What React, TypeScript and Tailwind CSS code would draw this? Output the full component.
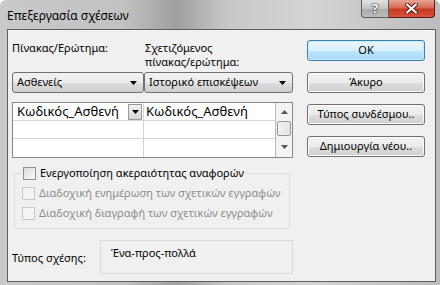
import React from 'react';

const ui = { fontFamily: '"Noto Sans", "Open Sans", Arial, sans-serif' };

function Caret({ className = '' }: { className?: string }) {
  return (
    <svg width="7" height="4" viewBox="0 0 7 4" className={className}>
      <path d="M0 0h7L3.5 4z" fill="#000" />
    </svg>
  );
}

function Combo({ label, width }: { label: string; width: string }) {
  return (
    <div
      className={`${width} h-[21px] flex items-center justify-between pl-[4px] pr-[6px] rounded-[3px] border border-[#707070] bg-[linear-gradient(#f2f2f2_0%,#ebebeb_50%,#dddddd_51%,#cfcfcf_100%)] text-[11px] text-black`}
    >
      <span>{label}</span>
      <Caret />
    </div>
  );
}

function Button({ label, primary }: { label: string; primary?: boolean }) {
  return (
    <div
      className={`w-[118px] h-[21px] flex items-center justify-center rounded-[3px] text-[11px] text-black border ${
        primary
          ? 'border-[#3c7fb1] bg-[linear-gradient(#eaf6fd_0%,#d9f0fc_50%,#bee6fd_51%,#a7d9f5_100%)] shadow-[inset_0_0_0_1px_#c5eefc]'
          : 'border-[#707070] bg-[linear-gradient(#f2f2f2_0%,#ebebeb_50%,#dddddd_51%,#cfcfcf_100%)] shadow-[inset_0_0_0_1px_#fcfcfc]'
      }`}
    >
      {label}
    </div>
  );
}

function Check({ label, disabled }: { label: string; disabled?: boolean }) {
  return (
    <div className="flex items-center gap-[4px] h-[14px] whitespace-nowrap">
      <span
        className={`w-[13px] h-[13px] shrink-0 border ${
          disabled
            ? 'border-[#c8c8c8] bg-[#f4f4f4]'
            : 'border-[#8e8f8f] bg-[linear-gradient(135deg,#dcdcdc,#fbfbfb)]'
        }`}
      />
      <span className={`text-[11px] leading-[14px] ${disabled ? 'text-[#8d8d8d]' : 'text-black'}`}>{label}</span>
    </div>
  );
}

export default function App() {
  return (
    <div
      className="w-[440px] h-[285px] flex flex-col pl-[7px] pr-[4px] pb-[3px] rounded-t-[6px] bg-[linear-gradient(90deg,#c9c9c9_0%,#c2c2c2_28%,#9f9f9f_40%,#c8c8c8_52%,#d4d4d4_70%,#bcbcbc_100%)] overflow-hidden"
      style={ui}
    >
      <div className="h-[29px] flex items-start justify-between">
        <div className="pt-[7px] text-[12px] text-black">Επεξεργασία σχέσεων</div>
        <div className="flex mr-[1px]">
          <div className="w-[28px] h-[18px] flex items-center justify-center border border-t-0 border-[#5b5b5b] rounded-bl-[4px] bg-[linear-gradient(#e2e2e2_0%,#c4c4c4_50%,#a9a9a9_51%,#bcbcbc_100%)] text-white font-bold text-[13px] [text-shadow:0_0_1px_#333,0_0_1px_#333,0_0_2px_#333]">
            ?
          </div>
          <div className="w-[46px] h-[18px] flex items-center justify-center border border-t-0 border-l-0 border-[#5b1d14] rounded-br-[4px] bg-[linear-gradient(#e8a493_0%,#d86a55_45%,#c83a22_55%,#d9533c_100%)]">
            <svg width="13" height="11" viewBox="0 0 13 11">
              <path d="M2 1.5l9 8M11 1.5l-9 8" stroke="#5a1a10" strokeWidth="4" strokeLinecap="round" />
              <path d="M2 1.5l9 8M11 1.5l-9 8" stroke="#fff" strokeWidth="2.2" strokeLinecap="round" />
            </svg>
          </div>
        </div>
      </div>

      <div className="flex-1 flex border border-[#5e5e5e] bg-[#f0f0f0] pt-[10px] pl-[4px] text-black">
        <div className="w-[281px] flex flex-col">
          <div className="h-[32px] flex text-[11px] leading-[14px]">
            <div className="w-[133px] pt-[1px]">Πίνακας/Ερώτημα:</div>
            <div className="pt-[1px]">
              <div>Σχετιζόμενος</div>
              <div>πίνακας/ερώτημα:</div>
            </div>
          </div>

          <div className="flex">
            <Combo label="Ασθενείς" width="w-[132px]" />
            <Combo label="Ιστορικό επισκέψεων" width="w-[149px]" />
          </div>

          <div className="mt-[9px] h-[56px] flex border border-[#828790] bg-white">
            <div className="flex-1 flex flex-col">
              <div className="h-[18px] flex border-b border-[#d4d4d4]">
                <div className="w-[131px] flex items-center justify-between pl-[4px] pr-[1px] border-r border-[#d4d4d4] text-[13px] leading-[17px]">
                  <span>Κωδικός_Ασθενή</span>
                  <span className="w-[14px] h-[16px] flex items-center justify-center border border-[#9a9a9a] bg-[linear-gradient(#f0f0f0,#d8d8d8)]">
                    <Caret />
                  </span>
                </div>
                <div className="flex-1 flex items-center pl-[2px] text-[13px] leading-[17px]">Κωδικός_Ασθενή</div>
              </div>
              <div className="h-[18px] flex border-b border-[#d4d4d4]">
                <div className="w-[131px] border-r border-[#d4d4d4]" />
              </div>
              <div className="flex-1 flex">
                <div className="w-[131px] border-r border-[#d4d4d4]" />
              </div>
            </div>
            <div className="w-[17px] flex flex-col items-center border-l border-[#b8b8b8] bg-[#f3f3f3]">
              <div className="h-[18px] flex items-center justify-center">
                <svg width="7" height="4" viewBox="0 0 7 4">
                  <path d="M0 4h7L3.5 0z" fill="#555" />
                </svg>
              </div>
              <div className="w-[14px] h-[15px] rounded-[2px] border border-[#959595] bg-[linear-gradient(90deg,#f3f3f3,#e3e3e3)]" />
              <div className="flex-1 flex items-center justify-center">
                <svg width="7" height="4" viewBox="0 0 7 4">
                  <path d="M0 0h7L3.5 4z" fill="#555" />
                </svg>
              </div>
            </div>
          </div>

          <fieldset className="mt-[8px] ml-[2px] w-[276px] h-[63px] border border-[#d5dfe5] rounded-[3px] pl-[7px] flex flex-col">
            <legend className="px-[1px]">
              <Check label="Ενεργοποίηση ακεραιότητας αναφορών" />
            </legend>
            <div className="mt-[6px] flex flex-col gap-[6px]">
              <Check label="Διαδοχική ενημέρωση των σχετικών εγγραφών" disabled />
              <Check label="Διαδοχική διαγραφή των σχετικών εγγραφών" disabled />
            </div>
          </fieldset>

          <div className="mt-[11px] flex items-center">
            <div className="w-[88px] pt-[2px] text-[11px]">Τύπος σχέσης:</div>
            <div className="w-[193px] h-[34px] border border-[#dadada] pl-[10px] pt-[4px] text-[11px]">Ένα-προς-πολλά</div>
          </div>
        </div>

        <div className="ml-[14px] flex flex-col gap-[11px]">
          <Button label="OK" primary />
          <Button label="Άκυρο" />
          <Button label="Τύπος συνδέσμου.." />
          <Button label="Δημιουργία νέου.." />
        </div>
      </div>
    </div>
  );
}
